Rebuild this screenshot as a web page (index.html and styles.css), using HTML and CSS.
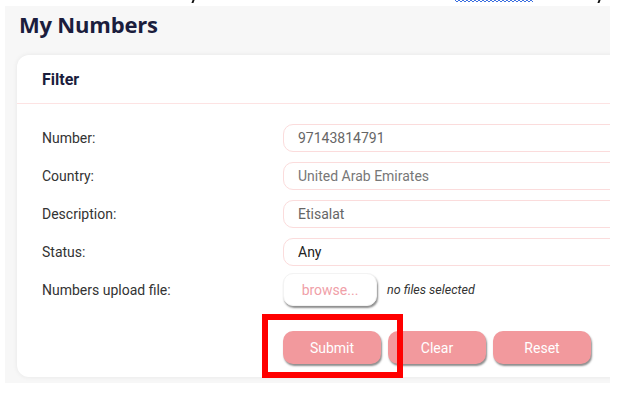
FILE: index.html
```html
<!DOCTYPE html>
<html lang="en">
  <head>
    <meta charset="UTF-8" />
    <meta name="viewport" content="width=device-width, initial-scale=1.0" />
    <title>My Numbers</title>
    <link rel="stylesheet" href="styles.css">
  </head>
  <body>
    <div class="top-strip">
      <span class="mark mark-1"></span>
      <svg class="squiggle" width="78" height="4" viewBox="0 0 78 4">
        <polyline points="0,1 2,3 4,1 6,3 8,1 10,3 12,1 14,3 16,1 18,3 20,1 22,3 24,1 26,3 28,1 30,3 32,1 34,3 36,1 38,3 40,1 42,3 44,1 46,3 48,1 50,3 52,1 54,3 56,1 58,3 60,1 62,3 64,1 66,3 68,1 70,3 72,1 74,3 76,1 78,3" fill="none" stroke="#3b6fe0" stroke-width="1" />
      </svg>
      <span class="mark mark-2"></span>
    </div>

    <div class="page">
      <h1>My Numbers</h1>

      <div class="card">
        <div class="card-header">Filter</div>
        <div class="card-body">
          <div class="row">
            <label for="number">Number:</label>
            <input type="text" id="number" class="field" value="97143814791" readonly />
          </div>
          <div class="row">
            <label for="country">Country:</label>
            <input type="text" id="country" class="field field-light" value="United Arab Emirates" readonly />
          </div>
          <div class="row">
            <label for="description">Description:</label>
            <input type="text" id="description" class="field" value="Etisalat" readonly />
          </div>
          <div class="row">
            <label for="status">Status:</label>
            <select id="status" class="field field-select">
              <option>Any</option>
            </select>
          </div>
          <div class="row file-row">
            <label>Numbers upload file:</label>
            <div class="file-pick">
              <button class="browse-btn">browse...</button>
              <span class="file-name">no files selected</span>
            </div>
          </div>
          <div class="row actions">
            <span></span>
            <div class="buttons">
              <button class="btn">Submit</button>
              <button class="btn">Clear</button>
              <button class="btn">Reset</button>
            </div>
          </div>
        </div>
      </div>
    </div>

    <!-- highlight box drawn over the submit button -->
    <div class="highlight"></div>
  </body>
</html>
```

FILE: styles.css
```css
body {
  margin: 0;
  background-color: #fff;
  font-family: Roboto, "Open Sans", sans-serif;
  position: relative;
  width: 618px;
  height: 396px;
  overflow: hidden;
}
.top-strip {
  height: 6px;
  position: relative;
  overflow: hidden;
}
.mark {
  position: absolute;
  top: 0;
  width: 2px;
  height: 3px;
  background-color: #111;
}
.mark-1 {
  left: 192px;
  transform: skewX(-20deg);
}
.mark-2 {
  left: 598px;
  transform: skewX(-20deg);
}
.squiggle {
  position: absolute;
  left: 455px;
  top: -1px;
}
.page {
  margin-left: 5px;
  width: 605px;
  height: 377px;
  background-color: #f7f7f7;
  overflow: hidden;
  padding-left: 12px;
  box-sizing: border-box;
}
h1 {
  margin: 0;
  padding: 3px 0 0 2px;
  height: 49px;
  box-sizing: border-box;
  font-family: "Open Sans", sans-serif;
  font-size: 22px;
  font-weight: 700;
  color: #1b1d3d;
  line-height: 30px;
  letter-spacing: -0.2px;
}
.card {
  width: 660px;
  background-color: #fff;
  border-radius: 12px;
  box-shadow: 0 0 5px rgba(0, 0, 0, 0.07);
}
.card-header {
  height: 48px;
  padding: 0 25px;
  display: flex;
  align-items: center;
  font-size: 16px;
  font-weight: 700;
  color: #1b1d3d;
  border-bottom: 1px solid #fde3e3;
}
.card-body {
  padding: 20px 0 13px 25px;
}
.row {
  display: grid;
  grid-template-columns: 241px 1fr;
  align-items: center;
}
.row + .row {
  margin-top: 10px;
}
.row label {
  font-size: 14px;
  color: #333;
}
.field {
  height: 28px;
  box-sizing: border-box;
  border: 1px solid #fbdcdc;
  border-radius: 10px;
  padding: 0 14px;
  font-family: Roboto, sans-serif;
  font-size: 14px;
  color: #666;
  background-color: #fff;
  outline: none;
}
.field-light {
  color: #777;
}
.field-select {
  appearance: none;
  color: #222;
}
.file-row {
  margin-top: 7px !important;
}
.file-pick {
  display: flex;
  align-items: center;
  gap: 10px;
}
.browse-btn {
  width: 94px;
  height: 33px;
  border: 1px solid #f3f3f3;
  border-radius: 10px;
  background-color: #fff;
  color: #f0a0a8;
  font-family: Roboto, sans-serif;
  font-size: 14px;
  box-shadow: 1px 2px 2px rgba(0, 0, 0, 0.45);
}
.file-name {
  font-size: 12.5px;
  font-style: italic;
  color: #333;
}
.actions {
  margin-top: 25px !important;
}
.buttons {
  display: flex;
  gap: 7px;
}
.btn {
  width: 98px;
  height: 33px;
  border: none;
  border-radius: 10px;
  background-color: #f2999d;
  color: #fff;
  font-family: Roboto, sans-serif;
  font-size: 14px;
  box-shadow: 1px 2px 2px rgba(0, 0, 0, 0.45);
}
.highlight {
  position: absolute;
  left: 262px;
  top: 314px;
  width: 141px;
  height: 64px;
  box-sizing: border-box;
  border: 6px solid #ff0000;
}
```
